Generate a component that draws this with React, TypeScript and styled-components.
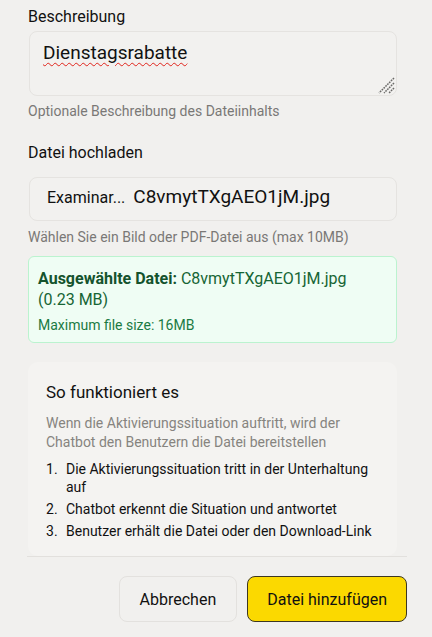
import React from "react";
import styled, { createGlobalStyle } from "styled-components";

const Global = createGlobalStyle`
  html, body { margin: 0; padding: 0; background: #f1f0ee; }
  body { font-family: Roboto, "Liberation Sans", Arial, sans-serif; color: #111; }
  * { box-sizing: border-box; }
`;

const Page = styled.div`
  width: 432px;
  height: 637px;
  display: flex;
  flex-direction: column;
  overflow: hidden;
`;

const Content = styled.div`
  padding: 7px 35px 0 28px;
  display: flex;
  flex-direction: column;
`;

const Field = styled.div<{ $mt?: number }>`
  display: flex;
  flex-direction: column;
  margin-top: ${(p) => p.$mt ?? 0}px;
`;

const Label = styled.div<{ $mb: number }>`
  font-size: 16px;
  line-height: 20px;
  color: #111;
  margin-bottom: ${(p) => p.$mb}px;
`;

const TextArea = styled.div`
  position: relative;
  height: 65px;
  margin-left: 1px;
  border: 1px solid #e5e3e0;
  border-radius: 8px;
  background: #f2f1ef;
  padding: 9px 13px;
  font-size: 19px;
  line-height: 24px;
  color: #111;
`;

const Misspelled = styled.span`
  text-decoration: underline wavy #e0241b;
  text-decoration-thickness: 1px;
  text-underline-offset: 3px;
`;

const Grip = styled.svg`
  position: absolute;
  right: 1px;
  bottom: 1px;
`;

const Hint = styled.div<{ $mt?: number }>`
  font-size: 14px;
  line-height: 20px;
  color: #7a7876;
  margin-top: ${(p) => p.$mt ?? 5}px;
`;

const FileBox = styled.div`
  height: 44px;
  margin-left: 1px;
  border: 1px solid #e5e3e0;
  border-radius: 8px;
  background: #f2f1ef;
  padding-left: 17px;
  font-size: 19px;
  line-height: 38px;
  color: #111;
  white-space: nowrap;
`;

const FileButton = styled.span`
  font-size: 16px;
  margin-right: 8px;
`;

const SelectedBox = styled.div`
  margin-top: 9px;
  border: 1px solid #bbf3cf;
  border-radius: 6px;
  background: #effdf4;
  padding: 11px 10px 8px 9px;
  color: #166534;
`;

const SelectedLine = styled.div`
  font-size: 16px;
  line-height: 21px;
`;

const Strong = styled.strong`
  font-weight: 700;
  color: #14532d;
`;

const SelectedMeta = styled.div`
  font-size: 14px;
  line-height: 18px;
  margin-top: 6px;
  color: #1a7a43;
`;

const InfoBox = styled.div`
  margin-top: 19px;
  border-radius: 10px;
  background: #f4f3f1;
  padding: 19px 14px 16px 18px;
`;

const InfoTitle = styled.div`
  font-size: 17px;
  line-height: 22px;
  color: #111;
`;

const InfoText = styled.div`
  font-size: 14px;
  line-height: 18.5px;
  color: #86847f;
  margin-top: 11px;
`;

const Steps = styled.ol`
  list-style: none;
  margin: 9px 0 0 0;
  padding: 0;
  font-size: 14px;
  line-height: 18px;
  color: #111;
  display: flex;
  flex-direction: column;
  gap: 4px;
`;

const Step = styled.li`
  display: grid;
  grid-template-columns: 20px 1fr;
`;

const StepNo = styled.span`
  color: #111;
`;

const Footer = styled.div`
  margin: 0 25px 0 27px;
  border-top: 1px solid #e2e0dd;
  padding-top: 19px;
  display: flex;
  justify-content: flex-end;
  gap: 10px;
`;

const Button = styled.button<{ $primary?: boolean }>`
  height: 46px;
  padding: 0 ${(p) => (p.$primary ? 19 : 20)}px;
  border-radius: 8px;
  font-family: Roboto, "Liberation Sans", Arial, sans-serif;
  font-size: 16px;
  color: #111;
  cursor: pointer;
  background: ${(p) => (p.$primary ? "#fbd900" : "#f1f0ee")};
  border: 1px solid ${(p) => (p.$primary ? "#3d3720" : "#e3e1de")};
`;

const steps = [
  "Die Aktivierungssituation tritt in der Unterhaltung auf",
  "Chatbot erkennt die Situation und antwortet",
  "Benutzer erhält die Datei oder den Download-Link",
];

export default function App() {
  return (
    <Page>
      <Global />
      <Content>
        <Field>
          <Label $mb={4}>Beschreibung</Label>
          <TextArea>
            <Misspelled>Dienstagsrabatte</Misspelled>
            <Grip width="17" height="17" viewBox="0 0 17 17">
              <g stroke="#6b6a68" strokeWidth="1.5" strokeDasharray="1.7 0.9">
                <line x1="16" y1="1" x2="1" y2="16" />
                <line x1="16" y1="6" x2="6" y2="16" />
                <line x1="16" y1="11" x2="11" y2="16" />
              </g>
            </Grip>
          </TextArea>
          <Hint>Optionale Beschreibung des Dateiinhalts</Hint>
        </Field>
        <Field $mt={22}>
          <Label $mb={14}>Datei hochladen</Label>
          <FileBox>
            <FileButton>Examinar...</FileButton>C8vmytTXgAEO1jM.jpg
          </FileBox>
          <Hint $mt={6}>Wählen Sie ein Bild oder PDF-Datei aus (max 10MB)</Hint>
        </Field>
        <SelectedBox>
          <SelectedLine>
            <Strong>Ausgewählte Datei:</Strong> C8vmytTXgAEO1jM.jpg (0.23 MB)
          </SelectedLine>
          <SelectedMeta>Maximum file size: 16MB</SelectedMeta>
        </SelectedBox>
        <InfoBox>
          <InfoTitle>So funktioniert es</InfoTitle>
          <InfoText>
            Wenn die Aktivierungssituation auftritt, wird der Chatbot den Benutzern die Datei bereitstellen
          </InfoText>
          <Steps>
            {steps.map((s, i) => (
              <Step key={i}>
                <StepNo>{i + 1}.</StepNo>
                <span>{s}</span>
              </Step>
            ))}
          </Steps>
        </InfoBox>
      </Content>
      <Footer>
        <Button>Abbrechen</Button>
        <Button $primary>Datei hinzufügen</Button>
      </Footer>
    </Page>
  );
}
